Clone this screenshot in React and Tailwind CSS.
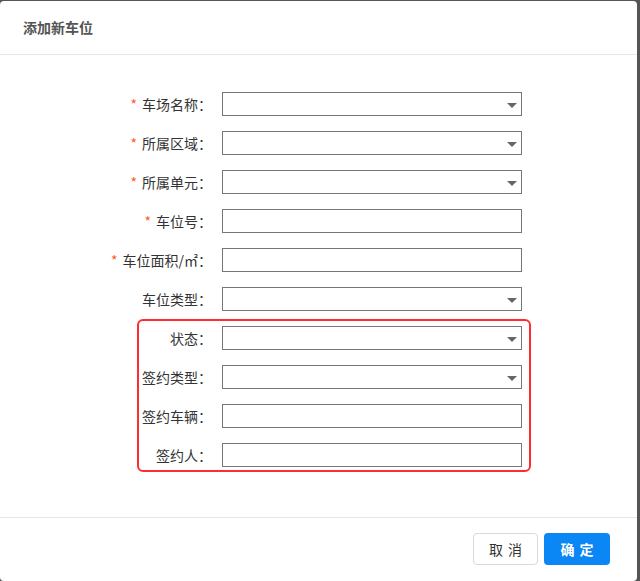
import React from "react";

const rows1 = [
  { label: "车场名称：", req: true, select: true },
  { label: "所属区域：", req: true, select: true },
  { label: "所属单元：", req: true, select: true },
  { label: "车位号：", req: true, select: false },
  { label: "车位面积/㎡：", req: true, select: false },
  { label: "车位类型：", req: false, select: true },
];
const rows2 = [
  { label: "状态：", req: false, select: true },
  { label: "签约类型：", req: false, select: true },
  { label: "签约车辆：", req: false, select: false },
  { label: "签约人：", req: false, select: false },
];

function Row({ label, req, select }) {
  return (
    <div className="flex items-center h-[24px]">
      <div className="w-[222px] pr-[10px] text-right text-[14px] text-[#333] leading-[24px] whitespace-nowrap">
        {req && <span className="text-[#ff5a1f] mr-[5px]">*</span>}
        {label}
      </div>
      <div className="relative w-[300px] h-[24px] border border-[#767676] bg-white">
        {select && (
          <svg className="absolute right-[4px] top-[10px]" width="10" height="5" viewBox="0 0 10 5">
            <path d="M0 0 L10 0 L5 5 Z" fill="#666" />
          </svg>
        )}
      </div>
    </div>
  );
}

export default function App() {
  return (
    <div
      className="w-[640px] h-[581px] bg-[#555] overflow-hidden"
      style={{ fontFamily: '"Noto Sans CJK SC", "Noto Sans", sans-serif' }}
    >
      <div className="mt-[1px] w-[637px] h-[580px] bg-white rounded-[4px] flex flex-col">
        <div className="h-[54px] border-b border-[#e5e5e5] px-[23px] flex items-center">
          <span className="text-[14px] font-bold text-[#555]">添加新车位</span>
        </div>
        <div className="flex-1 pt-[37px] flex flex-col gap-[15px]">
          {rows1.map((r) => (
            <Row key={r.label} {...r} />
          ))}
          <div className="relative flex flex-col gap-[15px]">
            <div className="absolute left-[137px] top-[-7px] w-[394px] h-[153px] border-2 border-[#ff2d2d] rounded-[6px] pointer-events-none" />
            {rows2.map((r) => (
              <Row key={r.label} {...r} />
            ))}
          </div>
        </div>
        <div className="h-[64px] border-t border-[#e5e5e5] flex justify-end items-start pt-[15px] pr-[27px] gap-[6px]">
          <button className="w-[65px] h-[32px] border border-[#d9d9d9] rounded-[4px] bg-white text-[14px] text-[#333] tracking-[5px] pl-[5px]">
            取消
          </button>
          <button className="w-[66px] h-[32px] rounded-[4px] bg-[#0a86f5] text-[14px] text-white font-bold tracking-[5px] pl-[5px]">
            确定
          </button>
        </div>
      </div>
    </div>
  );
}
